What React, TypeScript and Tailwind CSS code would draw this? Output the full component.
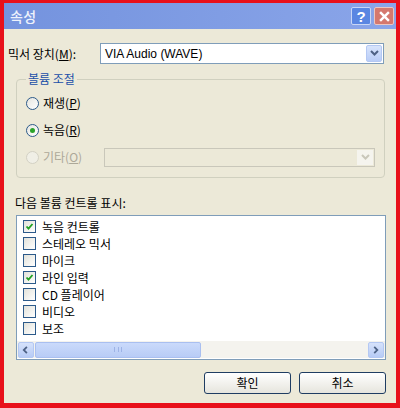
import React from 'react';

const font = { fontFamily: '"Noto Sans CJK KR", "Noto Sans", sans-serif' };

const items = [
  { label: '녹음 컨트롤', checked: true },
  { label: '스테레오 믹서', checked: false },
  { label: '마이크', checked: false },
  { label: '라인 입력', checked: true },
  { label: 'CD 플레이어', checked: false },
  { label: '비디오', checked: false },
  { label: '보조', checked: false },
];

function Chevron({ className = '', dir = 'down' }: { className?: string; dir?: 'down' | 'left' | 'right' }) {
  const d =
    dir === 'down' ? 'M1 2l3.5 3.5L8 2' : dir === 'left' ? 'M5.5 1L2 4.5 5.5 8' : 'M2.5 1L6 4.5 2.5 8';
  return (
    <svg className={className} viewBox="0 0 9 9" fill="none" stroke="currentColor" strokeWidth={2}>
      <path d={d} />
    </svg>
  );
}

function ComboArrow({ disabled }: { disabled?: boolean }) {
  return (
    <div
      className={
        disabled
          ? 'w-[16px] h-full flex items-center justify-center bg-[#f5f4ee] text-[#c9c7ba]'
          : 'w-[16px] h-[17px] flex items-center justify-center rounded-[2px] bg-gradient-to-b from-[#d8e4fc] to-[#b9cdf7] border border-[#b4c8f3] text-[#4d6185]'
      }
    >
      <Chevron className="w-[9px] h-[9px]" />
    </div>
  );
}

function Radio({ checked, disabled }: { checked?: boolean; disabled?: boolean }) {
  return (
    <span
      className={
        'w-[13px] h-[13px] rounded-full border flex items-center justify-center shrink-0 ' +
        (disabled ? 'border-[#d3d1c4] bg-[#f0efe6]' : 'border-[#2c5a8a] bg-gradient-to-br from-[#e6e6e0] to-white')
      }
    >
      {checked && <span className="w-[5px] h-[5px] rounded-full bg-[#2aa32a]" />}
    </span>
  );
}

function Check({ checked }: { checked?: boolean }) {
  return (
    <span className="w-[13px] h-[13px] border border-[#2c5a8a] bg-gradient-to-br from-[#e2e2da] to-white flex items-center justify-center shrink-0">
      {checked && (
        <svg viewBox="0 0 9 9" className="w-[9px] h-[9px]" fill="none" stroke="#21a121" strokeWidth={1.8}>
          <path d="M1.5 4.5l2 2.2L7.5 2" />
        </svg>
      )}
    </span>
  );
}

function Button({ children }: { children: React.ReactNode }) {
  return (
    <button className="w-[87px] h-[22px] rounded-[3px] border border-[#1f3d62] bg-gradient-to-b from-white to-[#e6e5dd] text-[12px] text-black flex items-center justify-center">
      {children}
    </button>
  );
}

export default function App() {
  return (
    <div className="w-[400px] h-[408px] bg-[#e8101a] pt-[3px] pl-[4px] pr-[4px] pb-[5px]" style={font}>
      <div className="flex flex-col h-full">
        {/* Title bar */}
        <div className="h-[26px] shrink-0 bg-gradient-to-r from-[#7493de] to-[#8aa5e9] flex items-center pl-[6px] pr-[2px]">
          <span className="text-[14px] text-[#eef2fc] font-medium tracking-wide">속성</span>
          <div className="ml-auto flex gap-[3px]">
            <div className="w-[20px] h-[18px] rounded-[2px] bg-[#5a86e2] border border-[#c8d6f6] flex items-center justify-center text-white text-[15px] font-bold leading-none" style={{ fontFamily: '"Liberation Sans", sans-serif' }}>
              ?
            </div>
            <div className="w-[20px] h-[18px] rounded-[2px] bg-[#d5786e] border border-[#ecc6c0] flex items-center justify-center">
              <svg viewBox="0 0 10 10" className="w-[11px] h-[11px]" stroke="white" strokeWidth={2.2} fill="none">
                <path d="M1 1l8 8M9 1l-8 8" />
              </svg>
            </div>
          </div>
        </div>

        {/* Body */}
        <div className="flex-1 bg-[#ece9d8] flex flex-col text-[12px] text-black">
          <div className="flex items-center mt-[14px] pl-[4px]">
            <span className="w-[92px]">
              믹서 장치(<span className="underline">M</span>):
            </span>
            <div className="w-[284px] h-[21px] bg-white border border-[#7f9db9] flex items-center pl-[4px] pr-[1px]">
              <span className="flex-1" style={{ fontFamily: '"Liberation Sans", sans-serif' }}>VIA Audio (WAVE)</span>
              <ComboArrow />
            </div>
          </div>

          {/* Group box */}
          <fieldset className="ml-[12px] w-[369px] h-[108px] mt-[6px] border border-[#d0d0bf] rounded-[4px] px-[9px] pt-[5px]">
            <legend className="ml-[0px] px-[2px] text-[#1a4fa8]">볼륨 조절</legend>
            <div className="flex flex-col gap-[7px]">
              <label className="flex items-center gap-[4px] h-[20px]">
                <Radio />
                <span>
                  재생(<span className="underline">P</span>)
                </span>
              </label>
              <label className="flex items-center gap-[4px] h-[20px]">
                <Radio checked />
                <span>
                  녹음(<span className="underline">R</span>)
                </span>
              </label>
              <label className="flex items-center gap-[4px] h-[20px] text-[#aca899]">
                <Radio disabled />
                <span className="w-[57px]">
                  기타(<span className="underline">O</span>)
                </span>
                <div className="w-[271px] h-[19px] border border-[#c9c7ba] bg-[#ece9d8] flex justify-end p-[1px]">
                  <ComboArrow disabled />
                </div>
              </label>
            </div>
          </fieldset>

          <div className="mt-[18px] pl-[11px] h-[14px] flex items-center">다음 볼륨 컨트롤 표시:</div>

          {/* List */}
          <div className="ml-[12px] mt-[5px] w-[370px] h-[145px] bg-white border border-[#7f9db9] flex flex-col">
            <div className="flex-1 pt-[2px]">
              {items.map((it) => (
                <div key={it.label} className="h-[17px] flex items-center gap-[6px] pl-[6px]">
                  <Check checked={it.checked} />
                  <span>{it.label}</span>
                </div>
              ))}
            </div>
            <div className="h-[17px] mb-[1px] flex items-center bg-[#f4f3ee] px-[1px]">
              <div className="w-[16px] h-[16px] rounded-[2px] bg-gradient-to-b from-[#d6e2fb] to-[#b7cbf5] border border-[#b4c8f3] flex items-center justify-center text-[#4d6185]">
                <Chevron dir="left" className="w-[8px] h-[8px]" />
              </div>
              <div className="w-[166px] h-[16px] ml-[1px] rounded-[2px] bg-gradient-to-b from-[#cadafb] to-[#b8ccf6] border border-[#a9bff0] flex items-center justify-center">
                <span className="w-[8px] h-[5px] border-x border-[#9db3e6] flex justify-center">
                  <span className="w-[1px] h-full bg-[#9db3e6]" />
                </span>
              </div>
              <div className="flex-1" />
              <div className="w-[16px] h-[16px] rounded-[2px] bg-gradient-to-b from-[#d6e2fb] to-[#b7cbf5] border border-[#b4c8f3] flex items-center justify-center text-[#4d6185]">
                <Chevron dir="right" className="w-[8px] h-[8px]" />
              </div>
            </div>
          </div>

          <div className="flex justify-end gap-[8px] mt-[12px] pr-[10px]">
            <Button>확인</Button>
            <Button>취소</Button>
          </div>
        </div>
      </div>
    </div>
  );
}
